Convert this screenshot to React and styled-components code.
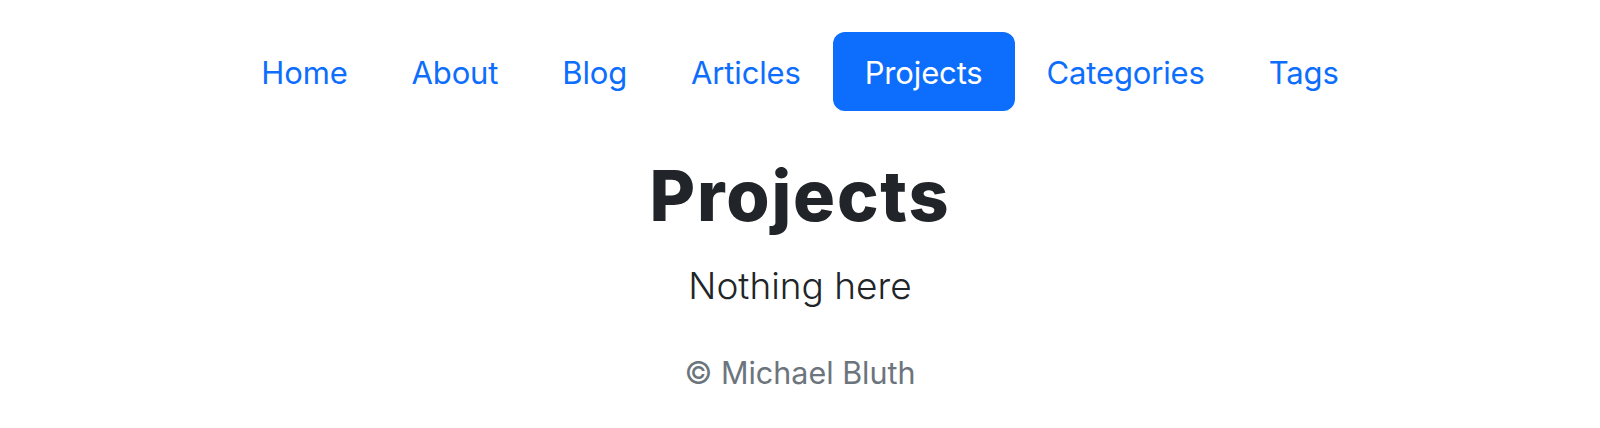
import React from "react";
import styled, { createGlobalStyle } from "styled-components";

const Global = createGlobalStyle`
  html, body { margin: 0; padding: 0; background: #fff; }
  body {
    font-family: Inter, "Noto Sans", "Liberation Sans", sans-serif;
    color: #212529;
  }
`;

const Page = styled.div`
  display: flex;
  flex-direction: column;
  align-items: center;
  padding-top: 32px;
`;

const Nav = styled.nav`
  display: flex;
  justify-content: center;
`;

const NavLink = styled.a`
  display: block;
  padding: 17px 32px 15px;
  font-size: 31px;
  line-height: 47px;
  letter-spacing: -0.15px;
  border-radius: 12px;
  text-decoration: none;
  color: ${(p) => (p.$active ? "#fff" : "#0d6efd")};
  background: ${(p) => (p.$active ? "#0d6efd" : "transparent")};
`;

const Title = styled.h1`
  margin: 43px 0 0;
  font-size: 70px;
  font-weight: 800;
  line-height: 1.2;
  letter-spacing: 1.8px;
  color: #212529;
`;

const Lead = styled.p`
  margin: 20px 0 0;
  font-size: 37px;
  font-weight: 300;
  line-height: 1.5;
  color: #212529;
`;

const Footer = styled.footer`
  margin-top: 36px;
  font-size: 30.5px;
  line-height: 1.5;
  color: #6c757d;
`;

const items = ["Home", "About", "Blog", "Articles", "Projects", "Categories", "Tags"];

export default function App() {
  return (
    <>
      <Global />
      <Page>
        <Nav>
          {items.map((it) => (
            <NavLink key={it} href="#" $active={it === "Projects"}>
              {it}
            </NavLink>
          ))}
        </Nav>
        <Title>Projects</Title>
        <Lead>Nothing here</Lead>
        <Footer>© Michael Bluth</Footer>
      </Page>
    </>
  );
}
